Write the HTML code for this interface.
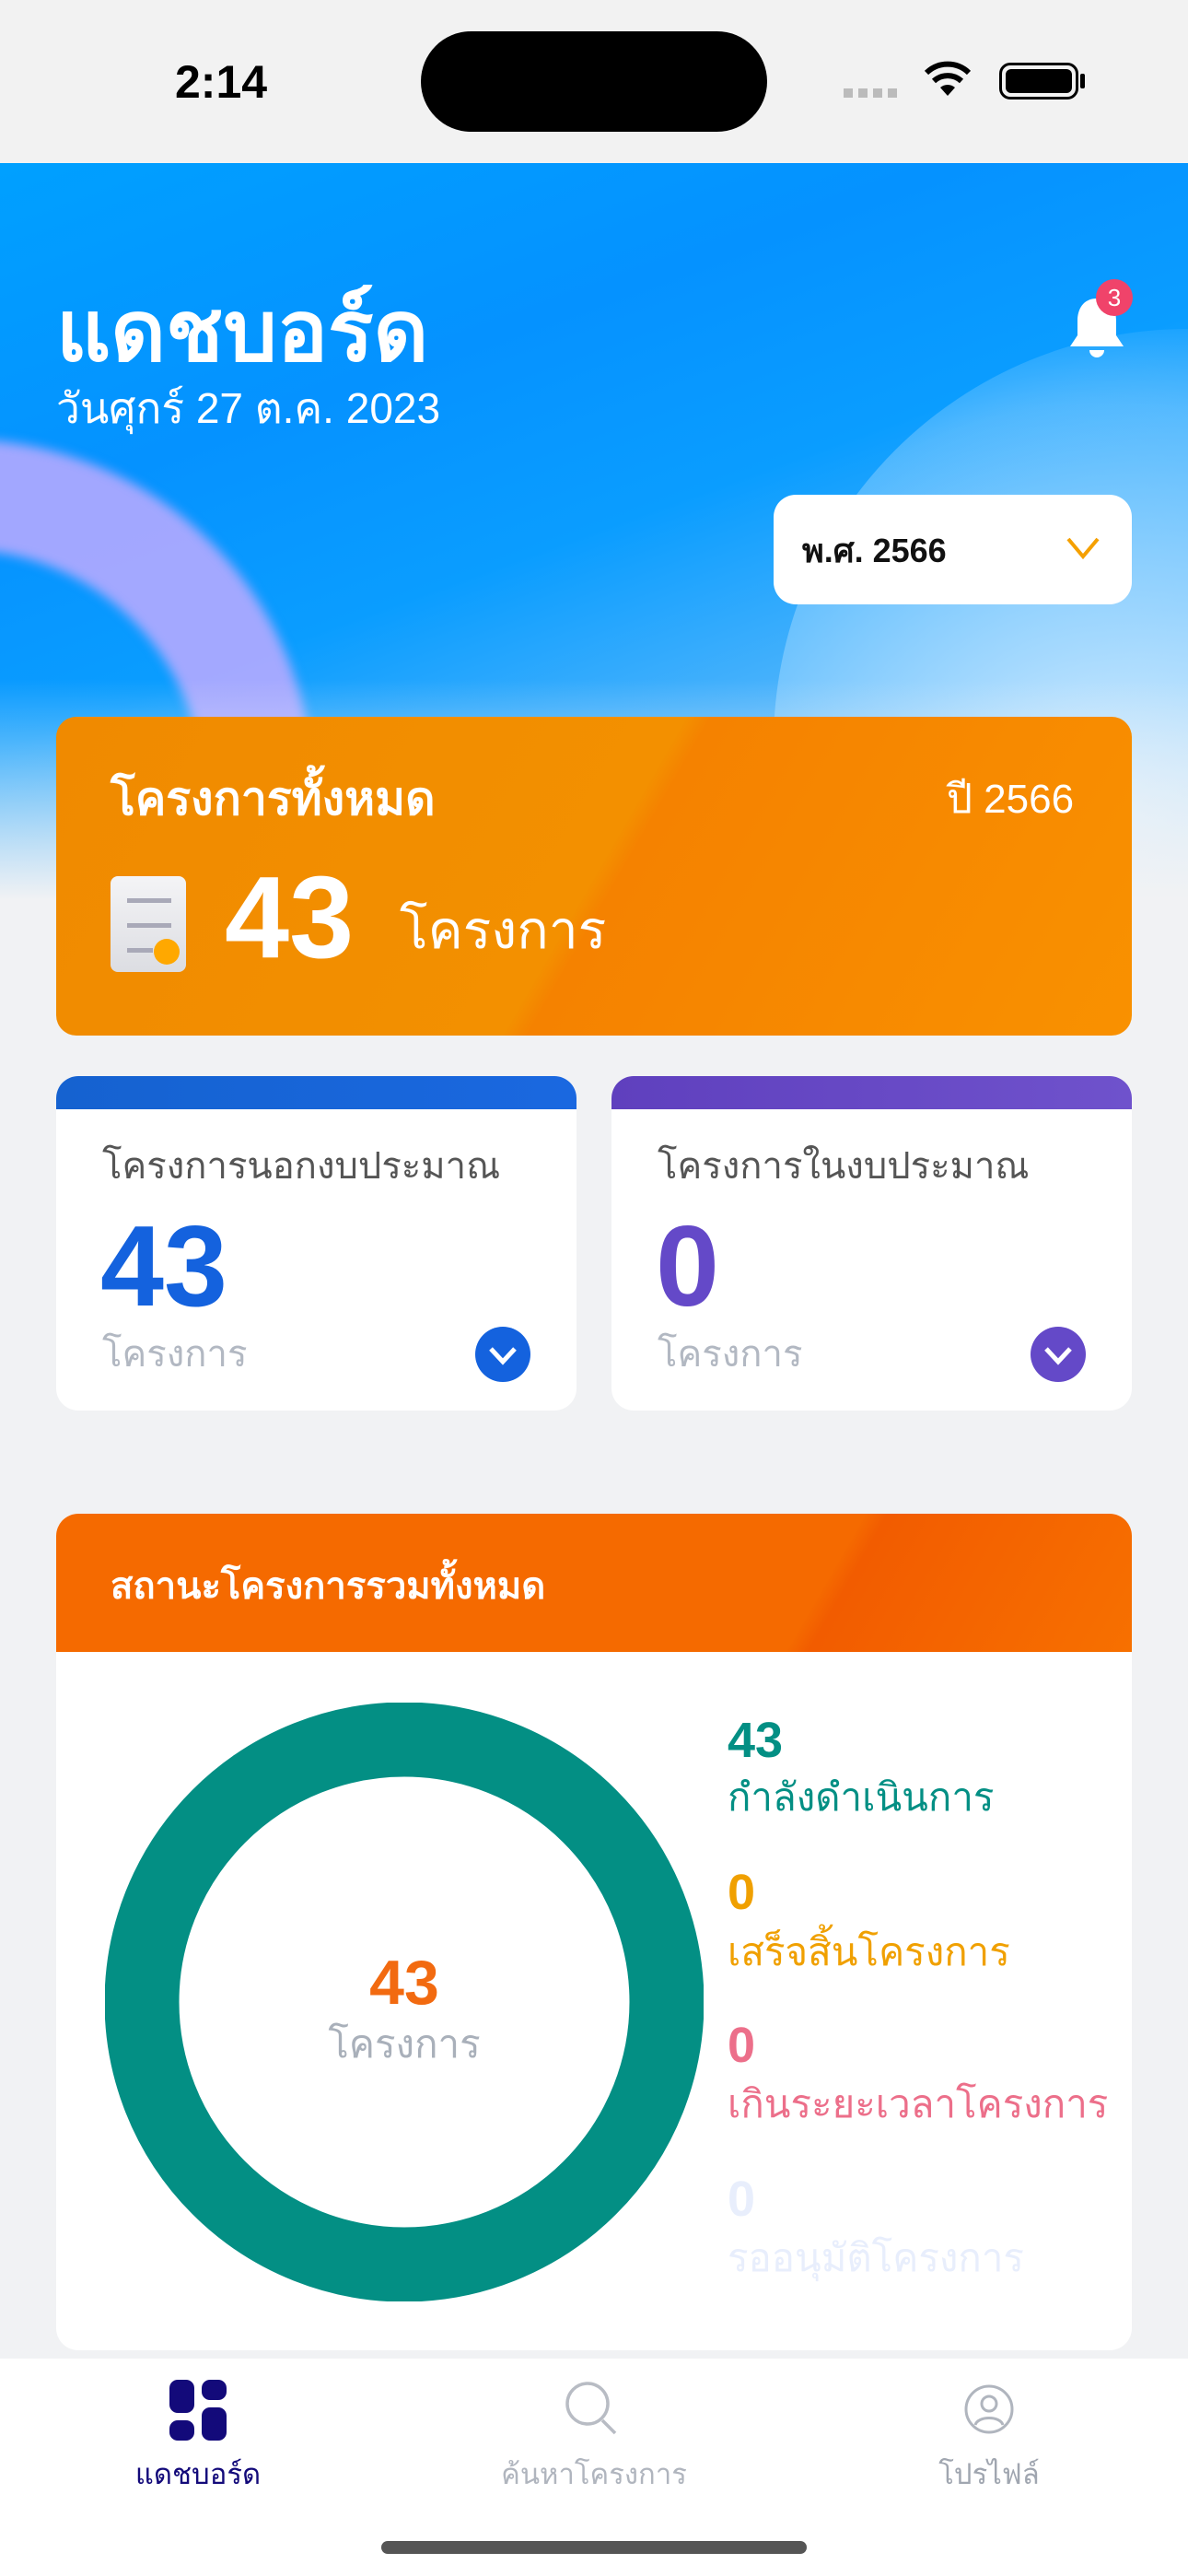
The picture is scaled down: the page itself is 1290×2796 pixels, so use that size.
<!DOCTYPE html>
<html><head><meta charset="utf-8">
<style>
*{margin:0;padding:0;box-sizing:border-box}
body{width:1290px;height:2796px;position:relative;overflow:hidden;background:#f1f2f4;font-family:"Liberation Sans",sans-serif}
.abs{position:absolute}
.t{position:absolute;white-space:nowrap;line-height:1}
</style></head><body>
<!-- status bar -->
<div class="abs" style="left:0;top:0;width:1290px;height:177px;background:#f2f2f2"></div>
<div class="t" style="left:190px;top:64px;font-size:50px;font-weight:bold;color:#000">2:14</div>
<div class="abs" style="left:457px;top:34px;width:376px;height:109px;border-radius:55px;background:#000"></div>
<div class="abs" style="left:916px;top:96px;width:60px;height:10px;background:repeating-linear-gradient(90deg,#bbb 0 10px,transparent 10px 16px)"></div>
<svg class="abs" style="left:1003px;top:66px" width="52" height="40" viewBox="0 0 52 40"><path d="M26 38 L18 29 A12 12 0 0 1 34 29 Z" fill="#000"/><path d="M11 22 A22 22 0 0 1 41 22" stroke="#000" stroke-width="6" fill="none"/><path d="M3 13 A33 33 0 0 1 49 13" stroke="#000" stroke-width="6" fill="none"/></svg>
<div class="abs" style="left:1085px;top:68px;width:86px;height:40px;border:3px solid #000;border-radius:12px;padding:4px"><div style="width:100%;height:100%;background:#000;border-radius:6px"></div></div>
<div class="abs" style="left:1173px;top:80px;width:5px;height:16px;background:#000;border-radius:2px"></div>

<!-- header bg -->
<div class="abs" style="left:0;top:177px;width:1290px;height:800px;overflow:hidden;background:linear-gradient(160deg,#00a0ff 0%,#0592ff 30%,#0a9dff 50%,#5bb8fb 75%,#f1f2f4 100%)">
  <div class="abs" style="left:-420px;top:300px;width:760px;height:760px;border-radius:50%;border:120px solid rgba(190,170,255,.85);filter:blur(6px)"></div>
  <div class="abs" style="left:840px;top:180px;width:900px;height:900px;border-radius:50%;background:radial-gradient(circle at 40% 60%,rgba(220,240,255,.9),rgba(120,200,255,.6) 60%,rgba(120,200,255,0) 75%)"></div>
  <div class="abs" style="left:0;top:560px;width:1290px;height:240px;background:linear-gradient(180deg,rgba(241,242,244,0),#f1f2f4)"></div>
</div>

<div class="t" style="left:61px;top:314px;font-size:92px;font-weight:bold;color:#fff">แดชบอร์ด</div>
<div class="t" style="left:61px;top:420px;font-size:46px;color:#fff">วันศุกร์ 27 ต.ค. 2023</div>
<svg class="abs" style="left:1158px;top:318px" width="66" height="80" viewBox="0 0 66 80"><path d="M33 6 C18 6 12 18 12 30 L12 46 L4 58 L62 58 L54 46 L54 30 C54 18 48 6 33 6Z" fill="#fff"/><path d="M25 62 A8 8 0 0 0 41 62" fill="#fff"/></svg>
<div class="abs" style="left:1190px;top:303px;width:40px;height:40px;border-radius:50%;background:#f0436a;color:#fff;font-size:26px;text-align:center;line-height:40px">3</div>

<div class="abs" style="left:840px;top:537px;width:389px;height:119px;border-radius:24px;background:#fff"></div>
<div class="t" style="left:871px;top:580px;font-size:36px;font-weight:bold;color:#111">พ.ศ. 2566</div>
<svg class="abs" style="left:1157px;top:582px" width="38" height="26" viewBox="0 0 38 26"><path d="M3 3 L19 22 L35 3" stroke="#f5a000" stroke-width="4" fill="none"/></svg>

<!-- orange card -->
<div class="abs" style="left:61px;top:778px;width:1168px;height:346px;border-radius:22px;background:linear-gradient(120deg,#f08a00 0%,#f39000 50%,#f58200 52%,#f99100 100%)"></div>
<div class="t" style="left:120px;top:842px;font-size:50px;font-weight:bold;color:#fff">โครงการทั้งหมด</div>
<div class="t" style="left:1028px;top:846px;font-size:44px;color:#fff">ปี 2566</div>
<div class="abs" style="left:120px;top:951px;width:82px;height:104px;border-radius:8px;background:linear-gradient(180deg,#f4f4f6,#dcdde2)"></div>
<div class="abs" style="left:138px;top:975px;width:48px;height:5px;background:#a9a9b8"></div>
<div class="abs" style="left:138px;top:1002px;width:48px;height:5px;background:#a9a9b8"></div>
<div class="abs" style="left:138px;top:1029px;width:28px;height:5px;background:#a9a9b8"></div>
<div class="abs" style="left:167px;top:1019px;width:28px;height:28px;border-radius:50%;background:#ffa800"></div>
<div class="t" style="left:244px;top:933px;font-size:126px;font-weight:bold;color:#fff">43</div>
<div class="t" style="left:434px;top:982px;font-size:57px;color:#fff">โครงการ</div>

<!-- two cards -->
<div class="abs" style="left:61px;top:1168px;width:565px;height:363px;border-radius:24px;background:#fff;overflow:hidden"><div style="height:36px;background:linear-gradient(90deg,#1562d0,#1a68e0)"></div></div>
<div class="abs" style="left:664px;top:1168px;width:565px;height:363px;border-radius:24px;background:#fff;overflow:hidden"><div style="height:36px;background:linear-gradient(90deg,#5f40be,#6f52cc)"></div></div>
<div class="t" style="left:111px;top:1246px;font-size:40px;color:#555">โครงการนอกงบประมาณ</div>
<div class="t" style="left:714px;top:1246px;font-size:40px;color:#555">โครงการในงบประมาณ</div>
<div class="t" style="left:109px;top:1313px;font-size:124px;font-weight:bold;color:#1462de">43</div>
<div class="t" style="left:712px;top:1313px;font-size:124px;font-weight:bold;color:#6449c8">0</div>
<div class="t" style="left:111px;top:1450px;font-size:40px;color:#b2b8c2">โครงการ</div>
<div class="t" style="left:714px;top:1450px;font-size:40px;color:#b2b8c2">โครงการ</div>
<svg class="abs" style="left:516px;top:1440px" width="60" height="60" viewBox="0 0 60 60"><circle cx="30" cy="30" r="30" fill="#1462de"/><path d="M17 24 L30 38 L43 24" stroke="#fff" stroke-width="5" fill="none"/></svg>
<svg class="abs" style="left:1119px;top:1440px" width="60" height="60" viewBox="0 0 60 60"><circle cx="30" cy="30" r="30" fill="#6449c8"/><path d="M17 24 L30 38 L43 24" stroke="#fff" stroke-width="5" fill="none"/></svg>

<!-- status card -->
<div class="abs" style="left:61px;top:1643px;width:1168px;height:908px;border-radius:24px;background:#fff;overflow:hidden"><div style="height:150px;background:linear-gradient(120deg,#f56a00 0%,#f56a00 70%,#f25c00 72%,#f77000 100%)"></div></div>
<div class="t" style="left:120px;top:1702px;font-size:40px;font-weight:bold;color:#fff">สถานะโครงการรวมทั้งหมด</div>
<svg class="abs" style="left:114px;top:1848px" width="650" height="650" viewBox="0 0 650 650"><circle cx="325" cy="325" r="285" stroke="#038f84" stroke-width="81" fill="none"/></svg>
<div class="t" style="left:339px;top:2118px;width:200px;text-align:center;font-size:68px;font-weight:bold;color:#f26a10">43</div>
<div class="t" style="left:289px;top:2198px;width:300px;text-align:center;font-size:42px;color:#a9b0ba">โครงการ</div>
<div class="t" style="left:790px;top:1862px;font-size:54px;font-weight:bold;color:#038f84">43</div>
<div class="t" style="left:790px;top:1930px;font-size:42px;color:#038f84">กำลังดำเนินการ</div>
<div class="t" style="left:790px;top:2027px;font-size:54px;font-weight:bold;color:#f0a000">0</div>
<div class="t" style="left:790px;top:2098px;font-size:42px;color:#f0a000">เสร็จสิ้นโครงการ</div>
<div class="t" style="left:790px;top:2193px;font-size:54px;font-weight:bold;color:#ec6f8a">0</div>
<div class="t" style="left:790px;top:2263px;font-size:42px;color:#ec6f8a">เกินระยะเวลาโครงการ</div>
<div class="t" style="left:790px;top:2360px;font-size:54px;font-weight:bold;color:#e8eefc">0</div>
<div class="t" style="left:790px;top:2430px;font-size:42px;color:#e8eefc">รออนุมัติโครงการ</div>

<!-- tab bar -->
<div class="abs" style="left:0;top:2560px;width:1290px;height:236px;background:#fff"></div>
<svg class="abs" style="left:184px;top:2583px" width="62" height="66" viewBox="0 0 62 66"><rect x="0" y="0" width="27" height="36" rx="9" fill="#130a7a"/><rect x="35" y="0" width="27" height="22" rx="9" fill="#130a7a"/><rect x="0" y="44" width="27" height="22" rx="9" fill="#130a7a"/><rect x="35" y="30" width="27" height="36" rx="9" fill="#130a7a"/></svg>
<div class="t" style="left:115px;top:2670px;width:200px;text-align:center;font-size:31px;color:#130a7a">แดชบอร์ด</div>
<svg class="abs" style="left:612px;top:2583px" width="64" height="64" viewBox="0 0 64 64"><circle cx="26" cy="26" r="22" stroke="#b8bcc4" stroke-width="3.5" fill="none"/><path d="M42 44 L56 58" stroke="#b8bcc4" stroke-width="3.5"/></svg>
<div class="t" style="left:520px;top:2670px;width:250px;text-align:center;font-size:31px;color:#b0b5be">ค้นหาโครงการ</div>
<svg class="abs" style="left:1046px;top:2587px" width="56" height="56" viewBox="0 0 56 56"><circle cx="28" cy="28" r="25" stroke="#b0b5be" stroke-width="3" fill="none"/><circle cx="28" cy="22" r="8" stroke="#b0b5be" stroke-width="3" fill="none"/><path d="M13 45 C16 35 40 35 43 45" stroke="#b0b5be" stroke-width="3" fill="none"/></svg>
<div class="t" style="left:974px;top:2670px;width:200px;text-align:center;font-size:31px;color:#a0a6b0">โปรไฟล์</div>
<div class="abs" style="left:414px;top:2758px;width:462px;height:14px;border-radius:7px;background:#555"></div>
</body></html>
